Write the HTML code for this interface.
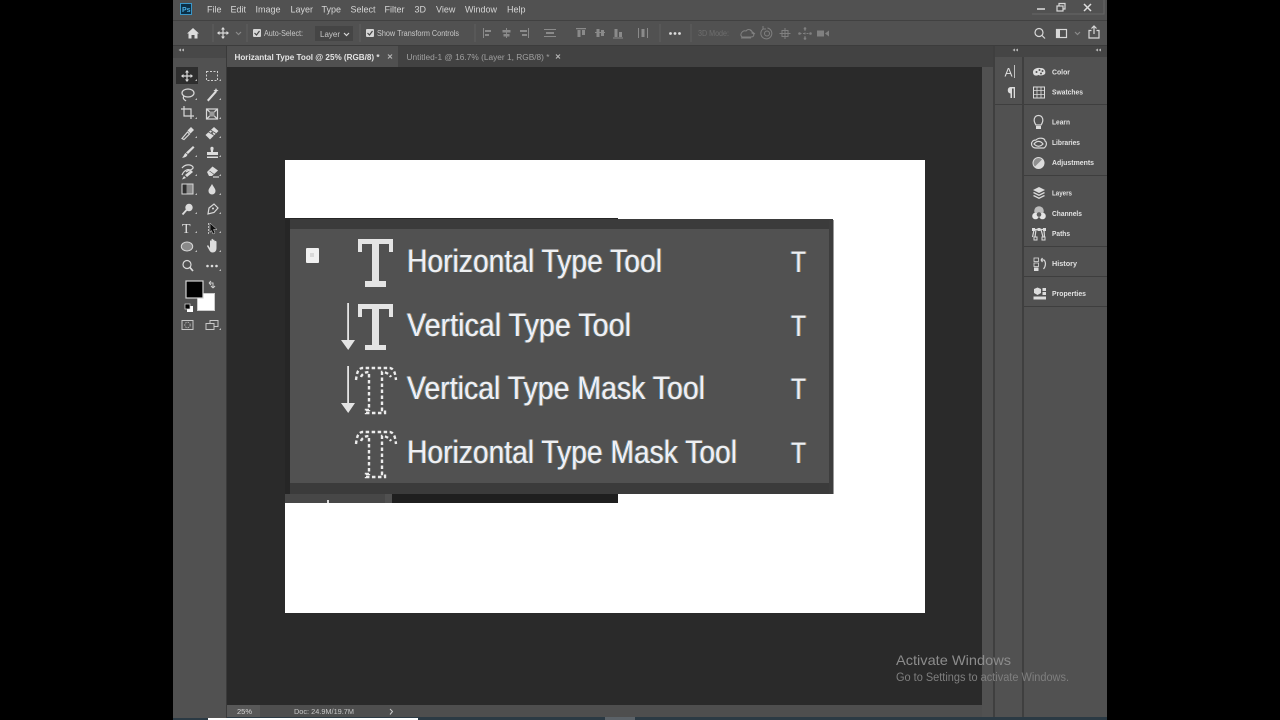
<!DOCTYPE html>
<html lang="en"><head><meta charset="utf-8"><title>Photoshop</title>
<style>
html,body{margin:0;padding:0;background:#000;width:1280px;height:720px;overflow:hidden}
svg{display:block;font-family:"Liberation Sans",sans-serif;filter:blur(.35px)}
.big{fill:#eef0f2;font-size:32px;filter:drop-shadow(-1px 0 .3px #4a8cc6) drop-shadow(1px 0 .3px #b8864e)}
.sc{fill:#eef0f2;font-size:30px;filter:drop-shadow(-1px 0 .3px #4a8cc6) drop-shadow(1px 0 .3px #b8864e)}
.m{fill:#d6d6d6;font-size:9px}
.o{fill:#c8c8c8;font-size:8px}
.p{fill:#e2e2e2;font-size:7.5px;font-weight:bold}
.i{fill:none;stroke:#d8d8d8;stroke-width:1.2}
.f{fill:#dcdcdc}
.d{fill:none;stroke:#8a8a8a;stroke-width:1.2}
.df{fill:#8a8a8a}
</style></head><body>
<svg width="1280" height="720" viewBox="0 0 1280 720" xmlns="http://www.w3.org/2000/svg">
<rect width="1280" height="720" fill="#000"/>
<rect x="173" y="0" width="934" height="717" fill="#515151"/>
<rect x="173" y="717" width="934" height="3" fill="#2b3a44"/>
<rect x="208" y="718" width="210" height="2" fill="#fff"/>
<rect x="605" y="717" width="30" height="3" fill="#5b6268"/>

<!-- bars -->
<rect x="173" y="20" width="934" height="1" fill="#414141"/>
<rect x="173" y="45" width="934" height="1" fill="#3c3c3c"/>
<rect x="173" y="46" width="934" height="21" fill="#484848"/>
<rect x="227" y="46" width="767" height="21" fill="#424242"/>
<rect x="227" y="46" width="171" height="21" fill="#505050"/>
<rect x="173" y="46" width="53" height="21" fill="#484848"/>
<rect x="173" y="58" width="53" height="660" fill="#515151"/>
<rect x="226" y="46" width="1" height="672" fill="#3a3a3a"/>

<!-- canvas -->
<rect x="227" y="67" width="755" height="638" fill="#2a2a2a"/>
<rect x="982" y="67" width="11" height="650" fill="#515151"/>
<rect x="227" y="705" width="755" height="12" fill="#4e4e4e"/>
<rect x="227" y="705" width="33" height="12" fill="#585858"/>
<rect x="993" y="46" width="2" height="671" fill="#3f3f3f"/>
<rect x="995" y="46" width="27" height="671" fill="#515151"/>
<rect x="1022" y="46" width="2" height="671" fill="#3f3f3f"/>
<rect x="1024" y="46" width="83" height="671" fill="#515151"/>
<rect x="995" y="46" width="112" height="11" fill="#454545"/>

<!-- document -->
<rect x="285" y="160" width="640" height="453" fill="#fff"/>
<rect x="285" y="218" width="333" height="285" fill="#262626"/>
<rect x="285" y="219" width="548" height="275" fill="#3b3b3b"/>
<rect x="285" y="219" width="5" height="275" fill="#262626"/>
<rect x="290" y="229" width="539" height="254" fill="#515151"/>
<rect x="829" y="220" width="4" height="274" fill="#3d3d3d"/>
<rect x="833" y="220" width="1" height="274" fill="#9a9a9a"/>
<rect x="285" y="494" width="333" height="9" fill="#2a2a2a"/>
<rect x="285" y="494" width="100" height="9" fill="#474747"/>
<rect x="385" y="494" width="7" height="9" fill="#505050"/>
<rect x="392" y="494" width="226" height="9" fill="#1f1f1f"/>
<rect x="327" y="500" width="2" height="3" fill="#ddd"/>

<!-- check square -->
<rect x="306" y="248" width="13" height="15" rx="1" fill="#f0f0f0"/>
<rect x="310" y="253" width="4" height="4" fill="#d8d8d8"/>

<!-- T icons -->
<g fill="#e4e4e4">
 <path d="M358 239H393V252H389V244H379V281H386V287H365V281H372V244H362V252H358Z"/>
 <path d="M358 304H393V317H389V309H379V345H386V350H365V345H372V309H362V317H358Z"/>
 <path d="M347.200 303H349V340H355L348.200 350L341 340H347.200Z"/>
 <path d="M347.200 366H349V403H355L348.200 413L341 403H347.200Z"/>
</g>
<g fill="none" stroke="#ececec" stroke-width="2.400" stroke-dasharray="3.500 2.500">
 <path d="M356 380C357 372 358 369 362 368H390C394 369 395 372 396 380M361 377C362 374 365 372 369 372V410H366V413H385V410H382V372C386 372 389 374 391 377"/>
 <path d="M356 444C357 436 358 433 362 432H390C394 433 395 436 396 444M361 441C362 438 365 436 369 436V474H366V477H385V474H382V436C386 436 389 438 391 441"/>
</g>

<!-- big labels -->
<text class="big" x="407" y="272" textLength="255" lengthAdjust="spacingAndGlyphs">Horizontal Type Tool</text>
<text class="big" x="407" y="336" textLength="224" lengthAdjust="spacingAndGlyphs">Vertical Type Tool</text>
<text class="big" x="407" y="399" textLength="298" lengthAdjust="spacingAndGlyphs">Vertical Type Mask Tool</text>
<text class="big" x="407" y="463" textLength="330" lengthAdjust="spacingAndGlyphs">Horizontal Type Mask Tool</text>
<text class="sc" x="791" y="272" textLength="15" lengthAdjust="spacingAndGlyphs">T</text>
<text class="sc" x="791" y="336" textLength="15" lengthAdjust="spacingAndGlyphs">T</text>
<text class="sc" x="791" y="399" textLength="15" lengthAdjust="spacingAndGlyphs">T</text>
<text class="sc" x="791" y="463" textLength="15" lengthAdjust="spacingAndGlyphs">T</text>

<!-- menu -->
<rect x="180.500" y="3.500" width="11" height="11" fill="#0b2f46" stroke="#3a97c9" stroke-width="1"/>
<text x="182" y="12" font-size="7" font-weight="bold" fill="#49b0e6">Ps</text>
<text class="m" x="207" y="12.500">File</text>
<text class="m" x="230.500" y="12.500">Edit</text>
<text class="m" x="255.500" y="12.500">Image</text>
<text class="m" x="290.500" y="12.500">Layer</text>
<text class="m" x="321.500" y="12.500">Type</text>
<text class="m" x="350.500" y="12.500">Select</text>
<text class="m" x="384.500" y="12.500">Filter</text>
<text class="m" x="414.500" y="12.500">3D</text>
<text class="m" x="436" y="12.500">View</text>
<text class="m" x="465" y="12.500">Window</text>
<text class="m" x="507" y="12.500">Help</text>

<!-- window controls -->
<path d="M1032 14H1104V0" fill="none" stroke="#666" stroke-width="1"/>
<path d="M1037 9H1045" stroke="#ddd" stroke-width="1.500"/>
<g class="i" stroke-width="1"><rect x="1057" y="6" width="6" height="5"/><path d="M1059 6V3.500H1065V9H1063"/></g>
<path d="M1084 4L1091 11M1091 4L1084 11" stroke="#ddd" stroke-width="1.500"/>

<!-- options bar -->
<path class="f" d="M193 28L199 33.500H197.500V38.500H194.500V35H191.500V38.500H188.500V33.500H187Z"/>
<g stroke="#5f5f5f"><path d="M213 24V42M247 24V42M360 24V42M475 24V42M660 24V42M691 24V42"/></g>
<path class="i" d="M223 28V38M218 33H228"/>
<path class="f" d="M223 27L225 29.500H221ZM223 39L225 36.500H221ZM217 33L219.500 31V35ZM229 33L226.500 31V35Z"/>
<path class="d" d="M236 32L238.500 34.500L241 32"/>
<rect x="253" y="29" width="8" height="8" rx="1" fill="#d6d6d6"/>
<path d="M254.500 33L256.500 35L259.500 31" stroke="#444" stroke-width="1.200" fill="none"/>
<text class="o" x="264" y="36" textLength="39" lengthAdjust="spacingAndGlyphs">Auto-Select:</text>
<rect x="315" y="26" width="38" height="15" fill="#454545"/>
<text class="o" x="320" y="37">Layer</text>
<path class="i" stroke-width="1" d="M344 33L346.500 35.500L349 33"/>
<rect x="366" y="29" width="8" height="8" rx="1" fill="#d6d6d6"/>
<path d="M367.500 33L369.500 35L372.500 31" stroke="#444" stroke-width="1.200" fill="none"/>
<text class="o" x="377" y="36" textLength="82" lengthAdjust="spacingAndGlyphs">Show Transform Controls</text>
<g class="df">
 <path d="M483 28h1v10h-1zM485 30h6v2h-6zM485 34h4v2h-4z"/>
 <path d="M506 28h1v10h-1zM502.500 30h8v2.500h-8zM503.500 34h6v2.500h-6z"/>
 <path d="M528 28h1v10h-1zM520 30h7v2h-7zM522 34h5v2h-5z"/>
 <path d="M544 29h12v1h-12zM546 32h8v2h-8zM544 36h12v1h-12z"/>
 <path d="M576 28h10v1.200h-10zM577.500 30h3v7h-3zM582 30h3v5h-3z"/>
 <path d="M595 32h10v1h-10zM596.500 29h3v8h-3zM601 30h3v6h-3z"/>
 <path d="M613 37.500h10v1h-10zM614.500 29h3v8h-3zM619 32h3v5h-3z"/>
 <path d="M638 28h1v10h-1zM647 28h1v10h-1zM641.500 29h3v8h-3z"/>
</g>
<g class="f"><circle cx="670.500" cy="33.500" r="1.400"/><circle cx="675" cy="33.500" r="1.400"/><circle cx="679.500" cy="33.500" r="1.400"/></g>
<text x="698" y="36" font-size="8" fill="#6e6e6e" textLength="31" lengthAdjust="spacingAndGlyphs">3D Mode:</text>
<g fill="none" stroke="#808080" stroke-width="1">
 <path d="M742 37C739 34 743 30 746 31C748 28 753 30 752 33C755 34 754 37 751 37ZM750 30L755 34M741 38H751"/>
 <path d="M763 29A5.500 5.500 0 1 0 767.500 28M763 29V26M763 29H766"/><circle cx="767" cy="33.500" r="2.500"/>
 <path d="M785 28V39M779.500 33.500H790.500"/><rect x="782" y="30.500" width="6" height="6"/>
 <path d="M805 29V38M799.500 33.500H810.500" stroke-dasharray="2 1.500"/>
</g>
<g fill="#808080">
 <circle cx="805" cy="28.500" r="1.300"/><circle cx="805" cy="38.500" r="1.300"/><circle cx="799.500" cy="33.500" r="1.300"/><circle cx="810.500" cy="33.500" r="1.300"/>
 <path d="M817 30.500h7v6h-7zM825 33.500l4-3v6z"/>
</g>
<g class="i">
 <circle cx="1039" cy="32.500" r="4"/><path d="M1042 35.500L1045 38.500"/>
 <rect x="1056.500" y="29.500" width="10" height="8"/>
 <path d="M1094 26V34M1091.500 28.500L1094 26L1096.500 28.500M1091.500 30.500H1089V38H1099V30.500H1096.500"/>
</g>
<rect x="1057" y="30" width="3" height="7" fill="#d8d8d8"/>
<path class="d" d="M1075 32L1077.500 34.500L1080 32"/>

<!-- tabs -->
<text x="234.500" y="60" font-size="8" font-weight="bold" fill="#e4e4e4" textLength="145" lengthAdjust="spacingAndGlyphs">Horizantal Type Tool @ 25% (RGB/8) *</text>
<path d="M388 54.500L392 58.500M392 54.500L388 58.500" stroke="#b5b5b5" stroke-width="1.100"/>
<text x="406.500" y="60" font-size="8" fill="#a0a0a0" textLength="143" lengthAdjust="spacingAndGlyphs">Untitled-1 @ 16.7% (Layer 1, RGB/8) *</text>
<path d="M556 54.500L560 58.500M560 54.500L556 58.500" stroke="#b5b5b5" stroke-width="1.100"/>
<g fill="#b5b5b5">
 <path d="M181 48.500V51.500L178.500 50ZM184 48.500V51.500L181.500 50Z"/>
 <path d="M1015 48.500V51.500L1012.500 50ZM1018 48.500V51.500L1015.500 50Z"/>
 <path d="M1098 48.500V51.500L1095.500 50ZM1101 48.500V51.500L1098.500 50Z"/>
</g>

<!-- tools -->
<rect x="176" y="67" width="22" height="17" fill="#2e2e2e"/>
<g>
 <path class="i" d="M187 71V81M182 76H192"/>
 <path class="f" d="M187 70L189 72.500H185ZM187 82L189 79.500H185ZM181 76L183.500 74V78ZM193 76L190.500 74V78Z"/>
 <rect x="206.500" y="71.500" width="11" height="9" fill="none" stroke="#cfcfcf" stroke-dasharray="2 1.500"/>
 <ellipse class="i" cx="188" cy="93" rx="6" ry="4"/><path class="i" d="M184 96C182 99 185 100 186 101"/>
 <path class="f" d="M207 100L215 91L216.500 92.500L208.500 101.500Z"/><path class="f" d="M216 88l.8 1.800 1.800.8-1.800.8-.8 1.800-.8-1.800-1.800-.8 1.800-.8z"/>
 <path class="i" stroke-width="1.700" d="M181 109H191V119M184 106V116H194"/>
 <rect x="206.500" y="109" width="11" height="10" class="i"/><path class="i" d="M206.500 109L217.500 119M217.500 109L206.500 119"/><rect x="209.500" y="111.500" width="5" height="5" fill="#9a9a9a"/>
 <path class="i" d="M182 138.500L187.500 132L189.500 134L184 139.500Z"/><path class="f" d="M187.500 130.500L191 127L194 130L190.500 133.500Z"/>
 <path class="f" d="M205.500 135L214 127L218.500 131L210 139.500Z"/><path d="M208.500 132L214.500 135.500M210.500 130L216 133.500" stroke="#555" stroke-width=".8"/><circle cx="212" cy="133" r="1.200" fill="#666"/>
 <path class="f" d="M193 146L194.500 147.500L188 154L186 152.500Z"/><path class="f" d="M185.500 153L187.500 154.500C187 157 184 158 182 157.500C184 156.500 184 154 185.500 153Z"/>
 <path class="f" d="M210.500 147.500A2.200 2.200 0 0 1 213.500 147.500C214 149 212.800 150.500 213 152H218V155H207V152H211C211 150.500 210 149 210.500 147.500ZM207 156.500H218V158H207Z"/>
 <path class="i" d="M182 168C185 164 191 164 193 167C194 170 188 170 186 172M182 175C184 170 188 169 190 170"/>
 <path class="f" d="M185 175L191 170L193 172L187 177ZM184 176L186 178L182 179.500Z"/>
 <path class="f" d="M207 172L212.500 166.500L218 170.500L212 176H209Z"/><path d="M209.500 171L215 175" stroke="#555" stroke-width=".6"/><path d="M213 177H219" class="i"/>
 <rect x="182" y="184" width="11" height="10" fill="#8a8a8a" stroke="#d8d8d8"/><rect x="182.500" y="184.500" width="4" height="9" fill="#2f2f2f"/>
 <path class="f" d="M212 184C213.500 187 215.500 188.500 215.500 191A3.500 3.500 0 0 1 208.500 191C208.500 188.500 210.500 187 212 184Z"/>
 <circle class="f" cx="189" cy="207.500" r="3.700"/><path d="M186.500 210L182.500 214.500" stroke="#dcdcdc" stroke-width="1.800"/>
 <path class="i" d="M208 214L209 208L214 204L218 208L214 212.500Z"/><circle class="f" cx="213" cy="208.500" r="1"/>
 <text x="182" y="233" font-family="Liberation Serif,serif" font-size="14" fill="#e2e2e2">T</text>
 <path d="M208.500 223V234" stroke="#bbb" stroke-width="1" stroke-dasharray="2 1"/><path fill="#111" stroke="#ddd" stroke-width=".5" d="M210 223L217 229.500H213.500L215 233L213 234L211.500 230.500L210 232.500Z"/>
 <ellipse cx="187" cy="246.500" rx="5.700" ry="4.500" fill="#8a8a8a" stroke="#d8d8d8"/>
 <path class="f" d="M207 246L208 245L210 248V241.500C210 240 211.500 240 211.500 241.500V239.800C211.500 238.500 213 238.500 213 239.800V240.500C213 239.300 214.500 239.300 214.500 240.500V241.500C214.700 240.500 216.500 240.700 216.500 242V248C216.500 251 215 252.500 212.500 252.500C210 252.500 209.500 250.500 207 246Z"/>
 <circle class="i" stroke-width="1.300" cx="187" cy="264.500" r="4"/><path d="M189.800 267.300L193 271" stroke="#dcdcdc" stroke-width="1.700"/>
 <g class="f"><circle cx="207.500" cy="266" r="1.300"/><circle cx="212" cy="266" r="1.300"/><circle cx="216.500" cy="266" r="1.300"/></g>
</g>
<g fill="#bdbdbd">
 <path d="M195 81h2v-2zM219 81h2v-2zM195 100h2v-2zM219 100h2v-2zM195 119h2v-2zM219 119h2v-2zM195 138h2v-2zM219 138h2v-2zM195 157h2v-2zM219 157h2v-2zM195 176h2v-2zM219 176h2v-2zM195 195h2v-2zM219 195h2v-2zM195 214h2v-2zM219 214h2v-2zM195 233h2v-2zM219 233h2v-2zM195 252h2v-2zM219 252h2v-2zM219 271h2v-2zM219 330h2v-2z"/>
</g>
<rect x="197.500" y="293.500" width="17" height="17" fill="#fff" stroke="#ccc"/>
<rect x="186" y="281" width="17" height="17" fill="#000" stroke="#d2d2d2" stroke-width="1.200"/>
<path d="M209 283H213V288M209 283L211 281M209 283L211 285M213 288L211 286M213 288L215 286" fill="none" stroke="#cfcfcf" stroke-width="1"/>
<rect x="187" y="306" width="6" height="6" fill="#fff"/><rect x="185" y="304" width="5" height="5" fill="#000" stroke="#ddd" stroke-width=".7"/>
<rect x="182" y="320.500" width="11" height="9" fill="none" stroke="#c8c8c8"/><circle cx="187.500" cy="325" r="2.700" fill="none" stroke="#aaa" stroke-dasharray="1.500 1"/>
<rect x="210" y="320.500" width="8" height="6" fill="none" stroke="#c8c8c8"/><rect x="206" y="323.500" width="8" height="6" fill="#515151" stroke="#c8c8c8"/>

<!-- panel icons col1 -->
<text x="1004.500" y="76.500" font-size="12" fill="#dedede">A</text><path d="M1014.500 65V78" stroke="#ddd" stroke-width=".8"/>
<path class="f" d="M1012 87H1015V98H1013.700V88.500H1012V98H1010.500V93.500A3.300 3.300 0 0 1 1010.500 87Z"/>
<path d="M995 104.500H1022" stroke="#3e3e3e"/>
<g stroke="#3e3e3e"><path d="M1024 104.500H1107M1024 175.500H1107M1024 246.500H1107M1024 276.500H1107M1024 306.500H1107"/></g>

<!-- panel col2 -->
<g>
 <path class="f" d="M1033 72C1033 68.500 1038 67.500 1040 68C1045 67.500 1046 72 1045 74C1043 75.500 1040 76 1038.500 75C1035 76.500 1033 75 1033 72Z"/>
 <g fill="#515151"><circle cx="1036.500" cy="72" r="1"/><circle cx="1039.500" cy="70" r="1"/><circle cx="1042.500" cy="71" r="1"/><circle cx="1041" cy="73.500" r="1"/></g>
 <rect x="1033.500" y="87" width="11" height="11" fill="none" stroke="#dcdcdc"/><path d="M1037 87V98M1041 87V98M1033.500 90.500H1044.500M1033.500 94.500H1044.500" stroke="#dcdcdc" stroke-width=".8"/>
 <path class="i" stroke-width="1" d="M1036 125C1032.500 120 1034.500 115.500 1038.500 115.500C1042.500 115.500 1044.500 120 1041 125Z"/><rect x="1036" y="126" width="5" height="3" fill="#dcdcdc"/>
 <path class="i" stroke-width="1" d="M1036 148C1030 148 1030 140 1036 140C1039 137 1045 138 1045 141C1047 142 1047 146 1044 148Z"/><path class="i" stroke-width="1" d="M1034 144C1037 140 1041 141 1043 144C1040 147 1037 147 1034 144Z"/>
 <circle cx="1038.500" cy="163" r="5.500" fill="#8f8f8f" stroke="#dcdcdc"/><path class="f" d="M1042.500 159L1034.500 167A5.500 5.500 0 0 0 1042.500 159Z"/><path fill="#515151" d="M1042 158.500L1034 166.500"/>
 <path class="f" d="M1039 187L1045 190L1039 193L1033 190Z"/><path class="f" d="M1034 192L1039 194.500L1044 192L1045 193L1039 196L1033 193Z"/><path class="f" d="M1034 195L1039 197.500L1044 195L1045 196L1039 199L1033 196Z"/>
 <circle cx="1039" cy="211" r="4.800" fill="#bdbdbd"/><circle cx="1035.500" cy="216" r="3.300" fill="#e5e5e5"/><circle cx="1042.500" cy="216" r="3.300" fill="#e5e5e5"/><circle cx="1039" cy="214.500" r="2.300" fill="#5e5e5e"/>
 <path class="i" stroke-width="1" d="M1033 229.500H1045M1034 230L1032.500 237M1044 230L1044.500 237M1036 229.500L1035 237M1041 229.500L1043 237"/>
 <rect x="1032" y="228" width="3" height="3" fill="#dcdcdc"/><rect x="1037.500" y="228" width="3" height="3" fill="#dcdcdc"/><rect x="1043" y="228" width="3" height="3" fill="#dcdcdc"/>
 <rect x="1034" y="237" width="3" height="3" fill="none" stroke="#dcdcdc"/><rect x="1042" y="237" width="3" height="3" fill="none" stroke="#dcdcdc"/>
 <rect x="1034" y="258" width="4.500" height="3.500" fill="none" stroke="#dcdcdc" stroke-width=".8"/><rect x="1034" y="263" width="4.500" height="3.500" fill="none" stroke="#dcdcdc" stroke-width=".8"/><rect x="1034" y="267.500" width="4.500" height="3.500" fill="#dcdcdc"/>
 <path class="i" d="M1041 260H1044C1046 262 1046 266 1043.500 269M1041 260L1042.500 258M1041 260L1042.500 262"/>
 <path class="f" d="M1034 289L1037.500 287.500L1041 289V293L1037.500 295L1034 293Z"/><rect x="1042.500" y="288" width="3.500" height="3" fill="#dcdcdc"/><rect x="1042.500" y="292" width="3.500" height="3" fill="#dcdcdc"/><rect x="1033.500" y="296.500" width="12.500" height="3" fill="#dcdcdc"/>
</g>
<text class="p" x="1052" y="74.500" textLength="18" lengthAdjust="spacingAndGlyphs">Color</text>
<text class="p" x="1052" y="94.500" textLength="31" lengthAdjust="spacingAndGlyphs">Swatches</text>
<text class="p" x="1052" y="124.500" textLength="18" lengthAdjust="spacingAndGlyphs">Learn</text>
<text class="p" x="1052" y="145" textLength="28" lengthAdjust="spacingAndGlyphs">Libraries</text>
<text class="p" x="1052" y="165" textLength="42" lengthAdjust="spacingAndGlyphs">Adjustments</text>
<text class="p" x="1052" y="195.500" textLength="20" lengthAdjust="spacingAndGlyphs">Layers</text>
<text class="p" x="1052" y="216" textLength="30" lengthAdjust="spacingAndGlyphs">Channels</text>
<text class="p" x="1052" y="236" textLength="18" lengthAdjust="spacingAndGlyphs">Paths</text>
<text class="p" x="1052" y="266" textLength="25" lengthAdjust="spacingAndGlyphs">History</text>
<text class="p" x="1052" y="296" textLength="34" lengthAdjust="spacingAndGlyphs">Properties</text>

<!-- status -->
<text x="237" y="714" font-size="7.500" fill="#d8d8d8">25%</text>
<text x="294" y="714" font-size="7.500" fill="#c8c8c8" textLength="60" lengthAdjust="spacingAndGlyphs">Doc: 24.9M/19.7M</text>
<path d="M390 709L392.500 711.500L390 714.500" fill="none" stroke="#ccc"/>

<!-- watermark -->
<text x="896" y="665" font-size="14" fill="#8c8c8c" textLength="115" lengthAdjust="spacingAndGlyphs">Activate Windows</text>
<text x="896" y="681" font-size="11.500" fill="#7f7f7f" textLength="173" lengthAdjust="spacingAndGlyphs">Go to Settings to activate Windows.</text>
</svg>
</body></html>
